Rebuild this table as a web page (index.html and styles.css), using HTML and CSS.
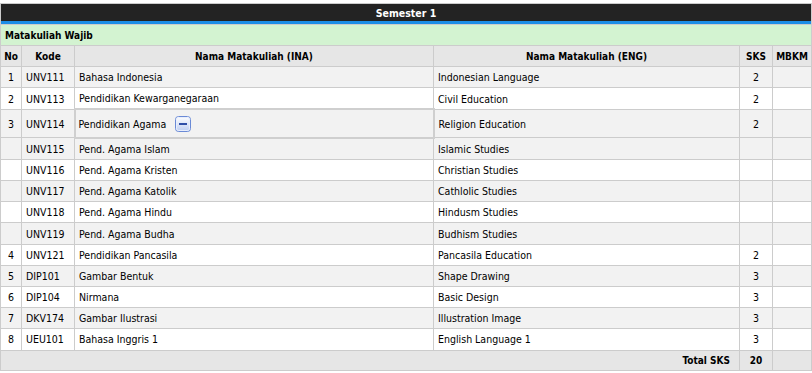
FILE: index.html
```html
<!DOCTYPE html>
<html>
<head>
<meta charset="utf-8">
<link rel="stylesheet" href="styles.css">
</head>
<body>
<div class="wrap">
<table class="mk">
<colgroup>
<col class="c-no"><col class="c-kode"><col class="c-ina"><col class="c-eng"><col class="c-sks"><col class="c-mbkm">
</colgroup>
<thead>
<tr class="sem"><th colspan="6">Semester 1</th></tr>
<tr class="bar"><td colspan="6"></td></tr>
<tr class="grp"><td colspan="6">Matakuliah Wajib</td></tr>
<tr class="hd"><th>No</th><th>Kode</th><th>Nama Matakuliah (INA)</th><th>Nama Matakuliah (ENG)</th><th>SKS</th><th>MBKM</th></tr>
</thead>
<tbody>
<tr class="g"><td class="no">1</td><td>UNV111</td><td>Bahasa Indonesia</td><td>Indonesian Language</td><td class="sks">2</td><td></td></tr>
<tr class="w"><td class="no">2</td><td>UNV113</td><td>Pendidikan Kewarganegaraan</td><td>Civil Education</td><td class="sks">2</td><td></td></tr>
<tr class="g tall"><td class="no">3</td><td>UNV114</td><td class="boxed"><span class="lbl">Pendidikan Agama</span><span class="minus"><svg width="16" height="16" viewBox="0 0 16 16"><defs><linearGradient id="gb" x1="0" y1="0" x2="0" y2="1"><stop offset="0" stop-color="#ffffff"/><stop offset="1" stop-color="#bccdf2"/></linearGradient></defs><rect x="0.5" y="0.5" width="15" height="15" rx="3" fill="url(#gb)" stroke="#6a8ad6"/><rect x="1.5" y="1.5" width="13" height="13" rx="2" fill="none" stroke="#e8eefc"/><rect x="4" y="7" width="8" height="2" fill="#2f4fa8"/></svg></span></td><td>Religion Education</td><td class="sks">2</td><td></td></tr>
<tr class="g"><td class="no"></td><td>UNV115</td><td>Pend. Agama Islam</td><td>Islamic Studies</td><td class="sks"></td><td></td></tr>
<tr class="w"><td class="no"></td><td>UNV116</td><td>Pend. Agama Kristen</td><td>Christian Studies</td><td class="sks"></td><td></td></tr>
<tr class="g"><td class="no"></td><td>UNV117</td><td>Pend. Agama Katolik</td><td>Cathlolic Studies</td><td class="sks"></td><td></td></tr>
<tr class="w"><td class="no"></td><td>UNV118</td><td>Pend. Agama Hindu</td><td>Hindusm Studies</td><td class="sks"></td><td></td></tr>
<tr class="g"><td class="no"></td><td>UNV119</td><td>Pend. Agama Budha</td><td>Budhism Studies</td><td class="sks"></td><td></td></tr>
<tr class="w"><td class="no">4</td><td>UNV121</td><td>Pendidikan Pancasila</td><td>Pancasila Education</td><td class="sks">2</td><td></td></tr>
<tr class="g"><td class="no">5</td><td>DIP101</td><td>Gambar Bentuk</td><td>Shape Drawing</td><td class="sks">3</td><td></td></tr>
<tr class="w"><td class="no">6</td><td>DIP104</td><td>Nirmana</td><td>Basic Design</td><td class="sks">3</td><td></td></tr>
<tr class="g"><td class="no">7</td><td>DKV174</td><td>Gambar Ilustrasi</td><td>Illustration Image</td><td class="sks">3</td><td></td></tr>
<tr class="w"><td class="no">8</td><td>UEU101</td><td>Bahasa Inggris 1</td><td>English Language 1</td><td class="sks">3</td><td></td></tr>
</tbody>
<tfoot>
<tr class="tot"><td colspan="4" class="tlabel">Total SKS</td><td class="sks">20</td><td></td></tr>
</tfoot>
</table>
</div>
</body>
</html>
```
FILE: styles.css
```css
html, body {
  margin: 0;
  padding: 0;
  background: #fff;
}
.wrap {
  padding-top: 3px;
}
.mk {
  width: 812px;
  border-collapse: collapse;
  table-layout: fixed;
  font-family: "DejaVu Sans Condensed", "DejaVu Sans", sans-serif;
  font-size: 10.5px;
  color: #000;
  border: 1px solid #cccccc;
}
.c-no { width: 21px; }
.c-kode { width: 53px; }
.c-ina { width: 359px; }
.c-eng { width: 306px; }
.c-sks { width: 33px; }
.c-mbkm { width: 39px; }

.mk td, .mk th {
  border: 1px solid #cccccc;
  padding: 0 4px;
  white-space: nowrap;
  overflow: hidden;
}
.sem th {
  background: #232323;
  color: #fff;
  font-weight: bold;
  font-size: 10.5px;
  height: 17px;
  padding: 0;
  border: none;
  text-align: center;
}
.bar td {
  background: #1c8de6;
  height: 3px;
  padding: 0;
  border: none;
  font-size: 0;
  line-height: 0;
}
.grp td {
  background: #d3f3d1;
  font-weight: bold;
  font-size: 10px;
  height: 20px;
  border-left: none;
  border-right: none;
}
.hd th {
  background: #e6e6e6;
  font-weight: bold;
  font-size: 10px;
  height: 20px;
  text-align: center;
  padding: 0 2px;
}
tbody tr td {
  height: 20.2px;
}
tbody tr.tall td {
  height: 26.3px;
}
tr.g td { background: #f2f2f2; }
tr.w td { background: #ffffff; }
td.no { text-align: center; padding: 0; }
td.sks { text-align: center; padding: 0; }
td.boxed {
  border: 2px solid #cfcfcf;
  padding-left: 3px;
}
.lbl {
  vertical-align: middle;
}
.minus {
  display: inline-block;
  width: 16px;
  height: 16px;
  margin-left: 9px;
  vertical-align: middle;
}
.minus svg { display: block; }
.tot td {
  background: #e6e6e6;
  font-weight: bold;
  font-size: 10px;
  height: 19px;
}
td.tlabel {
  text-align: right;
  padding-right: 9px;
}
```
